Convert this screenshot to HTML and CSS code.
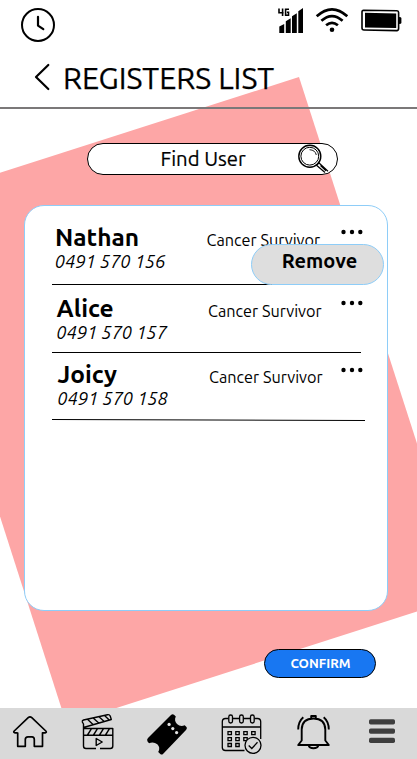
FILE: index.html
```html
<!DOCTYPE html>
<html lang="en">
<head>
<meta charset="utf-8">
<title>Registers List</title>
<link rel="stylesheet" href="styles.css">
</head>
<body>
<div class="screen">
  <svg class="backdrop" viewBox="0 0 417 759" aria-hidden="true"><path d="M299 77L417 443.5V611.5L66.5 724L0 516.5V172.8Z" fill="#fda6a6"/></svg>

  <div class="status">
    <svg class="clock" viewBox="20 7 36 36" fill="none" stroke="#000" stroke-linecap="round" stroke-linejoin="round"><circle cx="38" cy="25" r="16" stroke-width="2"/><path d="M38 16.8V25.6L43.3 29.2" stroke-width="2.2"/></svg>
    <svg class="signals" viewBox="270 0 140 40">
      <g fill="none" stroke="#000" stroke-width="1.6"><path d="M279 8.5V12.8H283.6M282.6 8.5V16M289 9.2H285.6V15.2H288.5V12.3H287"/></g>
      <path d="M279.3 26.5L284.2 24V33H279.3ZM285.8 21.3L290.7 18.3V33H285.8ZM292 16.2L296.8 13.2V33H292ZM298.3 11.2L303 8V33H298.3Z"/>
      <g fill="none" stroke="#000" stroke-width="2.7"><path d="M316.7 16.3Q332 2.3 347.3 16.3M321.4 20.8Q332 11.3 342.6 20.8M326.1 25.3Q332 20.3 337.9 25.3"/></g>
      <circle cx="332" cy="29.8" r="2.3"/>
      <path d="M363.5 10.2L397 10.8Q398.6 10.9 398.6 12.5V28.5Q398.6 30.5 396.8 30.6L364 30Q362 30 362 28V12Q362 10.2 363.5 10.2Z" fill="none" stroke="#000" stroke-width="1.6"/><path d="M365 12.8L396.2 13.5V28L365 27.5ZM399 17Q401.4 17 401.4 18V23Q401.4 24 399 24Z"/>
    </svg>
  </div>

  <header class="header">
    <svg class="back" viewBox="32 60 20 34" fill="none" stroke="#000" stroke-width="2.2" stroke-linecap="round" stroke-linejoin="round"><path d="M48.3 65L36 77L48.3 89"/></svg>
    <h1 class="title">REGISTERS LIST</h1>
  </header>

  <main class="main">
    <div class="search">
      <span class="search-text">Find User</span>
      <svg class="search-icon" viewBox="296 144 34 30" fill="none" stroke="#000"><circle cx="309.8" cy="156.2" r="11" stroke-width="1.4"/><circle cx="309.8" cy="156.2" r="8.9" stroke-width="1"/><path d="M309.5 149.7Q315.3 150 316.3 155" stroke-width=".9"/><path d="M316.5 165.3L325 172.5M318.8 162.8L328 171.3M320.5 165.5L326 170.7M316.5 165.3L319.2 162.5" stroke-width="1.2"/></svg>
    </div>

    <section class="card">
      <div class="row row-first">
        <div class="person"><div class="name">Nathan</div><div class="phone">0491 570 156</div></div>
        <div class="tag">Cancer Survivor</div>
        <svg class="dots" viewBox="0 0 22 6"><circle cx="2.5" cy="3" r="2.2"/><circle cx="11" cy="3" r="2.2"/><circle cx="19.3" cy="3" r="2.2"/></svg>
      </div>
      <div class="row row-second">
        <div class="person"><div class="name">Alice</div><div class="phone">0491 570 157</div></div>
        <div class="tag">Cancer Survivor</div>
        <svg class="dots" viewBox="0 0 22 6"><circle cx="2.5" cy="3" r="2.2"/><circle cx="11" cy="3" r="2.2"/><circle cx="19.3" cy="3" r="2.2"/></svg>
      </div>
      <div class="row row-third">
        <div class="person"><div class="name">Joicy</div><div class="phone">0491 570 158</div></div>
        <div class="tag">Cancer Survivor</div>
        <svg class="dots" viewBox="0 0 22 6"><circle cx="2.5" cy="3" r="2.2"/><circle cx="11" cy="3" r="2.2"/><circle cx="19.3" cy="3" r="2.2"/></svg>
      </div>
      <svg class="rule" viewBox="0 0 313 3"><path d="M0 .5L313 1.5" stroke="#000"/></svg>
      <button class="remove">Remove</button>
    </section>

    <button class="confirm">CONFIRM</button>
  </main>

  <nav class="nav">
    <svg viewBox="0 708 69.5 51" fill="none" stroke="#000" stroke-width="1.7" stroke-linejoin="round"><path d="M17.7 732.5V746.3H25.3V739.5Q25.3 736.8 28 736.8H32Q34.3 736.8 34.3 739.5V746.3H42.5V732.8H45.5Q47 732.3 45.8 731L31.8 717.6Q30 716 28.2 717.6L14.2 731Q13 732.3 14.7 732.8H17.7"/></svg>
    <svg viewBox="69.5 708 69.5 51" fill="none" stroke="#000" stroke-width="1.4" stroke-linejoin="round"><path d="M82.7 728.5H112.3V746Q112.3 748.5 109.8 748.5H99.5M95.5 748.5H85.5Q83 748.5 83 746V724L81.8 722Q81.5 720.5 83 720L107 714.7Q109 714.3 109.7 716L110.8 719.5L83 727.5M83 735.3H112.3M87 719.3L92.5 724.5M92.7 718L98.2 723M98.5 716.7L103.7 721.4M104 715.4L108.8 720M91 728.7L87 735M97 728.7L93 735M103 728.7L99 735M109 728.7L105 735M95.7 738.5V745.5L101.7 742Z"/></svg>
    <svg viewBox="139 708 69.5 51"><path d="M171 715Q172.5 713.7 174 714.7L175.8 716.5Q173.8 720.5 177 724Q180.5 727 184.7 725.2L186.7 727.3Q187.2 728.7 186 730L163 754Q161.7 755.2 160.3 754L158.2 752Q160.7 747.5 157.3 744.2Q153.5 741.2 149 743.2L147.4 741.3Q146.6 739.5 148 738Z"/><g fill="#e4e4e4"><circle cx="169.1" cy="724.4" r="1.6"/><circle cx="172.8" cy="728.6" r="1.6"/><circle cx="176.6" cy="732.6" r="1.6"/></g></svg>
    <svg viewBox="208.5 708 69.5 51" fill="none" stroke="#000" stroke-width="1.3"><path d="M228 718.5H225Q221.8 718.5 221.8 721.7V747.5Q221.8 750.5 225 750.5H244M232 718.5H239M243 718.5H250M254 718.5H257Q260.2 718.5 260.2 721.7V739M222 727H260"/><rect x="228.3" y="715" width="3.7" height="8" rx="1.8"/><rect x="239.1" y="715" width="3.7" height="8" rx="1.8"/><rect x="250" y="715" width="3.7" height="8" rx="1.8"/><path d="M227.5 731.7h3.4v3h-3.4zM235.3 731.7h3.4v3h-3.4zM243.3 731.7h3.4v3h-3.4zM251.2 731.7h3.4v3h-3.4zM227.5 737.7h3.4v3h-3.4zM235.3 737.7h3.4v3h-3.4zM243.3 737.7h3.4v3h-3.4zM227.5 743.5h3.4v3h-3.4zM235.3 743.5h3.4v3h-3.4z"/><circle cx="252.5" cy="745.3" r="8" fill="#d9d9d9"/><path d="M248.2 745.5L251.3 748.5L257 742.3"/></svg>
    <svg viewBox="278 708 69.5 51" fill="none" stroke="#000" stroke-width="1.9" stroke-linejoin="round"><path d="M298.2 745H328.8L325.3 740.5V729.5Q325 718.5 313.5 718.5Q302 718.5 301.7 729.5V740.5ZM311.2 718V716H315.8V718M308.7 745.5Q309.3 748.2 313.5 748.2Q317.7 748.2 318.3 745.5M303.3 717.2Q298.2 721.5 298.2 729.5M323.7 717.2Q328.8 721.5 328.8 729.5"/></svg>
    <svg viewBox="347.5 708 69.5 51" fill="#3e3e3e"><rect x="368.5" y="719.2" width="26" height="5.3" rx="1.7"/><rect x="368.5" y="728.4" width="26" height="5.3" rx="1.7"/><rect x="368.5" y="737.7" width="26" height="5.3" rx="1.7"/></svg>
  </nav>
</div>
</body>
</html>
```
FILE: styles.css
```css
* { box-sizing: border-box; margin: 0; padding: 0; }

body {
  background: #fff;
  color: #000;
  font-family: Ubuntu, "Noto Sans", "Open Sans", sans-serif;
}

svg { display: block; }

button { font-family: inherit; }

.screen {
  position: relative;
  display: flex;
  flex-direction: column;
  width: 417px;
  height: 759px;
  overflow: hidden;
}

.backdrop { position: absolute; inset: 0; z-index: -1; width: 417px; height: 759px; }

.status {
  display: flex;
  justify-content: space-between;
  height: 50px;
  padding: 0 7px 0 20px;
}
.clock { width: 36px; height: 36px; margin-top: 7px; }
.signals { width: 140px; height: 40px; }

.header {
  display: flex;
  align-items: flex-start;
  height: 59px;
  padding: 8px 0 0 32px;
  border-bottom: 2px solid #7b7879;
}
.back { width: 20px; height: 34px; margin: 2px 11px 0 0; }
.title {
  font-size: 30.4px;
  font-weight: 400;
  line-height: 40px;
  white-space: nowrap;
  -webkit-text-stroke: 0.25px #000;
}

.main { display: flex; flex-direction: column; flex: 1; padding-top: 34px; }

.search {
  display: flex;
  justify-content: space-between;
  width: 251px;
  height: 32px;
  margin-left: 87px;
  padding: 0 7px 0 72.5px;
  background: #fff;
  border: 1px solid #000;
  border-radius: 16px;
}
.search-text { font-size: 20.3px; line-height: 30px; -webkit-text-stroke: 0.2px #000; }
.search-icon { width: 34px; height: 30px; }

.card {
  position: relative;
  width: 364px;
  height: 406px;
  margin: 30px 0 0 24px;
  padding-left: 27px;
  background: #fff;
  border: 1px solid #8ecdf8;
  border-radius: 20px;
}
.row { display: flex; align-items: flex-start; width: 309px; white-space: nowrap; }
.row-first { height: 79px; padding: 19px 0 0 3px; border-bottom: 1px solid #000; }
.row-second { height: 68px; padding: 11px 0 0 4.5px; border-bottom: 1px solid #000; }
.row-third { height: 66px; padding: 9px 0 0 5.5px; }

.person { flex: none; width: 151.5px; }
.name { font-size: 24.5px; font-weight: 700; line-height: 25px; }
.phone { font-size: 18.1px; font-style: italic; line-height: 23.5px; }
.tag { flex: none; width: 134px; padding-top: 5px; font-size: 16.25px; line-height: 20px; }
.dots { flex: none; width: 22px; height: 6px; margin-top: 3.5px; }
.row-first .dots { margin-left: 0.5px; }
.row-second .dots { margin-left: -1px; }
.row-third .dots { margin: 5px 0 0 -2px; }
.rule { width: 313px; height: 3px; }

.remove {
  position: absolute;
  top: 38px;
  left: 226px;
  width: 133px;
  height: 41px;
  padding: 0 0 9px 4px;
  background: #dedede;
  border: 1px solid #8ecdf8;
  border-radius: 21px;
  color: #000;
  font-size: 20px;
  font-weight: 700;
}

.confirm {
  width: 112px;
  height: 29px;
  margin: 38px 0 0 264px;
  padding: 0 0 2px 1px;
  background: #1877f2;
  border: 1px solid #000;
  border-radius: 15px;
  color: #fff;
  font-size: 13.2px;
  font-weight: 700;
}

.nav { display: grid; grid-template-columns: repeat(6, 1fr); height: 51px; background: #d9d9d9; }
.nav svg { width: 69.5px; height: 51px; }
```
